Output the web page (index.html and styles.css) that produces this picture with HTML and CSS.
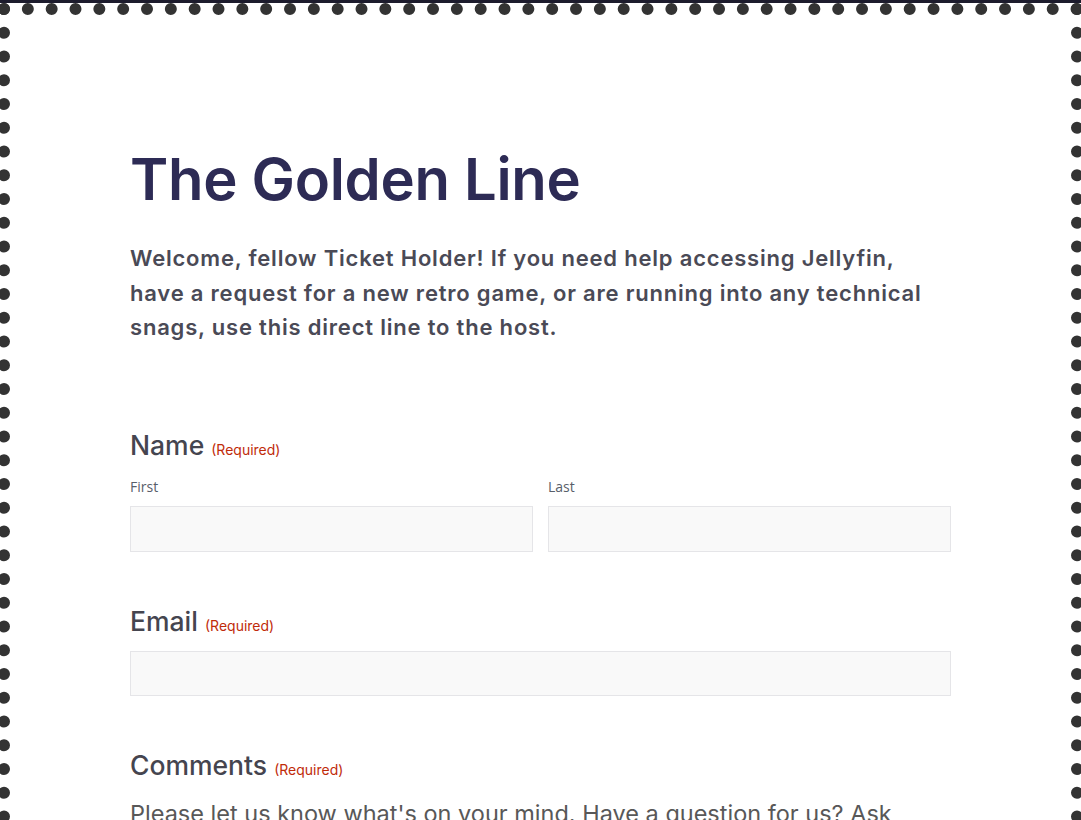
FILE: index.html
```html
<!DOCTYPE html>
<html>
<head>
	<title>The Golden Line</title>
	<link rel="stylesheet" href="styles.css">
</head>
<body>
	<div class="topbar"></div>
	<div class="frame">
		<div class="content">
			<h1 class="title">The Golden Line</h1>
			<p class="intro">Welcome, fellow Ticket Holder! If you need help accessing Jellyfin, have a request for a new retro game, or are running into any technical snags, use this direct line to the host.</p>

			<form class="form">
				<fieldset class="field">
					<legend class="field-label name-label">Name <span class="required">(Required)</span></legend>
					<div class="name-row">
						<div class="name-part">
							<label for="first" class="sub-label">First</label>
							<input type="text" id="first">
						</div>
						<div class="name-part">
							<label for="last" class="sub-label">Last</label>
							<input type="text" id="last">
						</div>
					</div>
				</fieldset>

				<div class="field">
					<label for="email" class="field-label">Email <span class="required">(Required)</span></label>
					<input type="email" id="email">
				</div>

				<div class="field">
					<label for="comments" class="field-label">Comments <span class="required">(Required)</span></label>
					<div class="description">Please let us know what's on your mind. Have a question for us? Ask away.</div>
					<textarea id="comments" rows="8"></textarea>
				</div>
			</form>
		</div>
	</div>
</body>
</html>
```

FILE: styles.css
```css
* {
	margin: 0;
	padding: 0;
	box-sizing: border-box;
}
html, body {
	overflow: hidden;
}
body {
	background: #fff;
	font-family: "Inter", "Noto Sans", sans-serif;
	color: #4a4a55;
}
.topbar {
	height: 3px;
	background: #1d1c2d;
}
.frame {
	margin: 0 -2px;
	border: 12px dotted #333;
	border-bottom: none;
	min-height: 1200px;
}
.content {
	width: 821px;
	margin-left: 120px;
	padding-top: 128px;
}
.title {
	font-family: "Inter", sans-serif;
	font-size: 58px;
	font-weight: 600;
	letter-spacing: -0.3px;
	line-height: 72px;
	color: #2d2b55;
}
.intro {
	margin-top: 26px;
	max-width: 814px;
	font-size: 22px;
	font-weight: 600;
	letter-spacing: 0.8px;
	line-height: 34.5px;
	color: #4a4a56;
}
.form {
	margin-top: 84px;
}
.field {
	border: none;
	margin-bottom: 53px;
}
.field-label {
	display: block;
	padding: 0;
	font-size: 26.5px;
	font-weight: 500;
	color: #45454f;
	margin-bottom: 14px;
}
.name-label {
	margin-bottom: 16px;
}
.required {
	font-size: 14px;
	font-weight: 400;
	letter-spacing: 0;
	color: #c02b0a;
}
.name-row {
	display: grid;
	grid-template-columns: 1fr 1fr;
	gap: 15px;
}
.sub-label {
	display: block;
	font-family: "Open Sans", sans-serif;
	font-size: 14px;
	color: #585e6a;
	margin-bottom: 10px;
}
input, textarea {
	display: block;
	width: 100%;
	height: 46px;
	background: #f9f9f9;
	border: 1px solid #e5e5e8;
	font: inherit;
}
#email {
	height: 45px;
}
textarea {
	height: 200px;
}
.description {
	font-size: 23.5px;
	color: #585858;
	margin-top: 18px;
	margin-bottom: 16px;
}
```
